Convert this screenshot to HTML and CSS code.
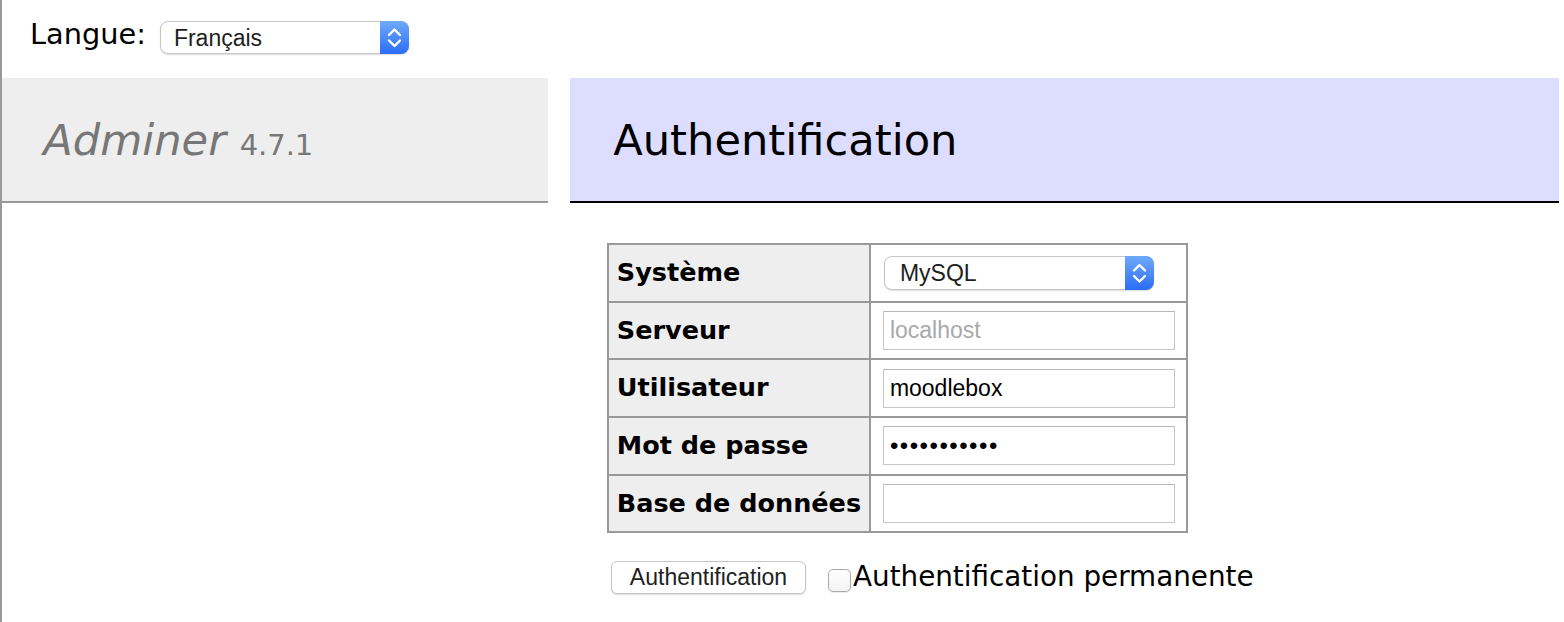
FILE: index.html
```html
<!DOCTYPE html>
<html lang="fr">
<head>
<meta charset="utf-8">
<title>Authentification - Adminer</title>
<link rel="stylesheet" href="styles.css">
</head>
<body>
<div class="page">
  <form class="lang">
    <span class="lang-label">Langue:</span><span class="select-wrap lang-select"><select class="select" name="lang"><option>Français</option></select><span class="arrows"><svg width="29" height="33" viewBox="0 0 29 33"><polyline points="9,14 14.5,8.5 20,14" fill="none" stroke="#fff" stroke-width="2.4" stroke-linecap="round" stroke-linejoin="round"/><polyline points="9,19.5 14.5,25 20,19.5" fill="none" stroke="#fff" stroke-width="2.4" stroke-linecap="round" stroke-linejoin="round"/></svg></span></span>
  </form>
  <div class="layout">
    <aside class="menu">
      <h1 class="brand"><a class="brand-name" href="#">Adminer</a> <span class="version">4.7.1</span></h1>
    </aside>
    <main class="content">
      <h2 class="title">Authentification</h2>
      <form class="login">
        <table class="login-table">
          <tr>
            <th>Système</th>
            <td><span class="select-wrap sys-select"><select class="select" name="driver"><option>MySQL</option></select><span class="arrows"><svg width="29" height="34" viewBox="0 0 29 34"><polyline points="9,14.5 14.5,9 20,14.5" fill="none" stroke="#fff" stroke-width="2.4" stroke-linecap="round" stroke-linejoin="round"/><polyline points="9,20 14.5,25.5 20,20" fill="none" stroke="#fff" stroke-width="2.4" stroke-linecap="round" stroke-linejoin="round"/></svg></span></span></td>
          </tr>
          <tr>
            <th>Serveur</th>
            <td><input class="field" type="text" name="server" placeholder="localhost"></td>
          </tr>
          <tr>
            <th>Utilisateur</th>
            <td><input class="field" type="text" name="username" value="moodlebox"></td>
          </tr>
          <tr>
            <th>Mot de passe</th>
            <td><input class="field field-pass" type="password" name="password" value="moodlebox01"></td>
          </tr>
          <tr>
            <th>Base de données</th>
            <td><input class="field" type="text" name="db"></td>
          </tr>
        </table>
        <p class="actions"><input class="btn" type="submit" value="Authentification"><label class="perm"><input class="chk" type="checkbox" name="auth[permanent]">Authentification permanente</label></p>
      </form>
    </main>
  </div>
</div>
</body>
</html>
```
FILE: styles.css
```css
html, body {
  margin: 0;
  padding: 0;
  background: #fff;
}
body {
  font-family: "DejaVu Sans", Verdana, sans-serif;
  font-size: 28.8px;
  line-height: 1.25;
  color: #000;
}
.page {
  border-left: 2px solid #999;
  min-height: 622px;
  box-sizing: border-box;
}
.lang {
  height: 78px;
  box-sizing: border-box;
  padding: 8.64px 0 0 28px;
  line-height: 51.84px;
}
.lang-label {
  vertical-align: baseline;
}
.select-wrap {
  display: inline-block;
  position: relative;
  vertical-align: middle;
  box-sizing: border-box;
  border: 1px solid #c6c6c6;
  border-radius: 8px;
  background: #fff;
  box-shadow: 0 1px 1.5px rgba(0, 0, 0, 0.14);
}
.lang-select {
  width: 249px;
  height: 33px;
  margin-left: 14px;
  margin-top: 4px;
}
.sys-select {
  width: 270px;
  height: 34px;
  margin-left: 3px;
  display: block;
}
.select {
  -webkit-appearance: none;
  appearance: none;
  display: block;
  width: 100%;
  height: 100%;
  border: 0;
  background: transparent;
  font-family: "Liberation Sans", Arial, sans-serif;
  font-size: 23px;
  color: #1e1e1e;
  padding: 0 0 0 13px;
  margin: 0;
  outline: none;
}
.sys-select .select {
  padding-left: 15px;
}
.arrows {
  position: absolute;
  top: -1px;
  right: -1px;
  bottom: -1px;
  width: 29px;
  border-radius: 0 8px 8px 0;
  background: linear-gradient(#6eaafb, #2b6df6);
  pointer-events: none;
  display: flex;
  align-items: center;
  justify-content: center;
}
.arrows svg {
  display: block;
}
.layout {
  display: grid;
  grid-template-columns: 546px 989px;
  column-gap: 22px;
  align-items: start;
}
.brand {
  margin: 0;
  font-size: 43.2px;
  font-weight: normal;
  line-height: 54px;
  padding: 34.56px 43.2px 34.56px 41.2px;
  background: #eee;
  border-bottom: 2px solid #999;
  color: #777;
  white-space: nowrap;
}
.brand-name {
  font-style: italic;
  color: #777;
  text-decoration: none;
}
.version {
  font-size: 67%;
  line-height: 1;
  color: #777;
}
.title {
  margin: 0 0 40px;
  font-size: 43.2px;
  font-weight: normal;
  line-height: 54px;
  padding: 34.56px 43.2px;
  background: #ddf;
  border-bottom: 2px solid #000;
  color: #000;
}
.login {
  margin: 0;
}
.login-table {
  margin: 0 0 0 37px;
  border-collapse: collapse;
  font-size: 25.92px;
  line-height: 1.25;
}
.login-table th,
.login-table td {
  border: 2px solid #999;
  height: 45.3px;
  vertical-align: middle;
}
.login-table th {
  background: #eee;
  text-align: left;
  font-weight: bold;
  font-size: 25.5px;
  white-space: nowrap;
  padding: 5.2px 7.8px;
}
.login-table td {
  padding: 5.2px 9px 5.2px 10px;
}
.field {
  display: block;
  box-sizing: border-box;
  width: 292px;
  height: 39px;
  margin: 0 2px;
  padding: 0 6px;
  border: 1px solid #c6c6c6;
  border-top-color: #b8b8b8;
  border-radius: 0;
  background: #fff;
  font-family: "Liberation Sans", Arial, sans-serif;
  font-size: 23px;
  color: #000;
  outline: none;
}
.field::placeholder {
  color: #a9a9a9;
}
.field-pass {
  letter-spacing: 1.5px;
  font-size: 24px;
}
.actions {
  margin: 27px 0 0 41px;
  display: flex;
  align-items: center;
}
.btn {
  box-sizing: border-box;
  width: 195px;
  height: 33px;
  margin: 0;
  padding: 0;
  border: 1px solid #c6c6c6;
  border-radius: 6px;
  background: #fff;
  box-shadow: 0 1px 1.5px rgba(0, 0, 0, 0.14);
  font-family: "Liberation Sans", Arial, sans-serif;
  font-size: 23px;
  color: #222;
}
.perm {
  display: inline-flex;
  align-items: center;
  font-size: 27.8px;
  white-space: nowrap;
}
.chk {
  -webkit-appearance: none;
  appearance: none;
  box-sizing: border-box;
  width: 23px;
  height: 23px;
  margin: 5px 2px 0 22px;
  border: 1px solid #a9a9a9;
  border-radius: 5px;
  background: linear-gradient(#fff, #f3f3f3);
  box-shadow: 0 1px 1px rgba(0, 0, 0, 0.08);
}
```
